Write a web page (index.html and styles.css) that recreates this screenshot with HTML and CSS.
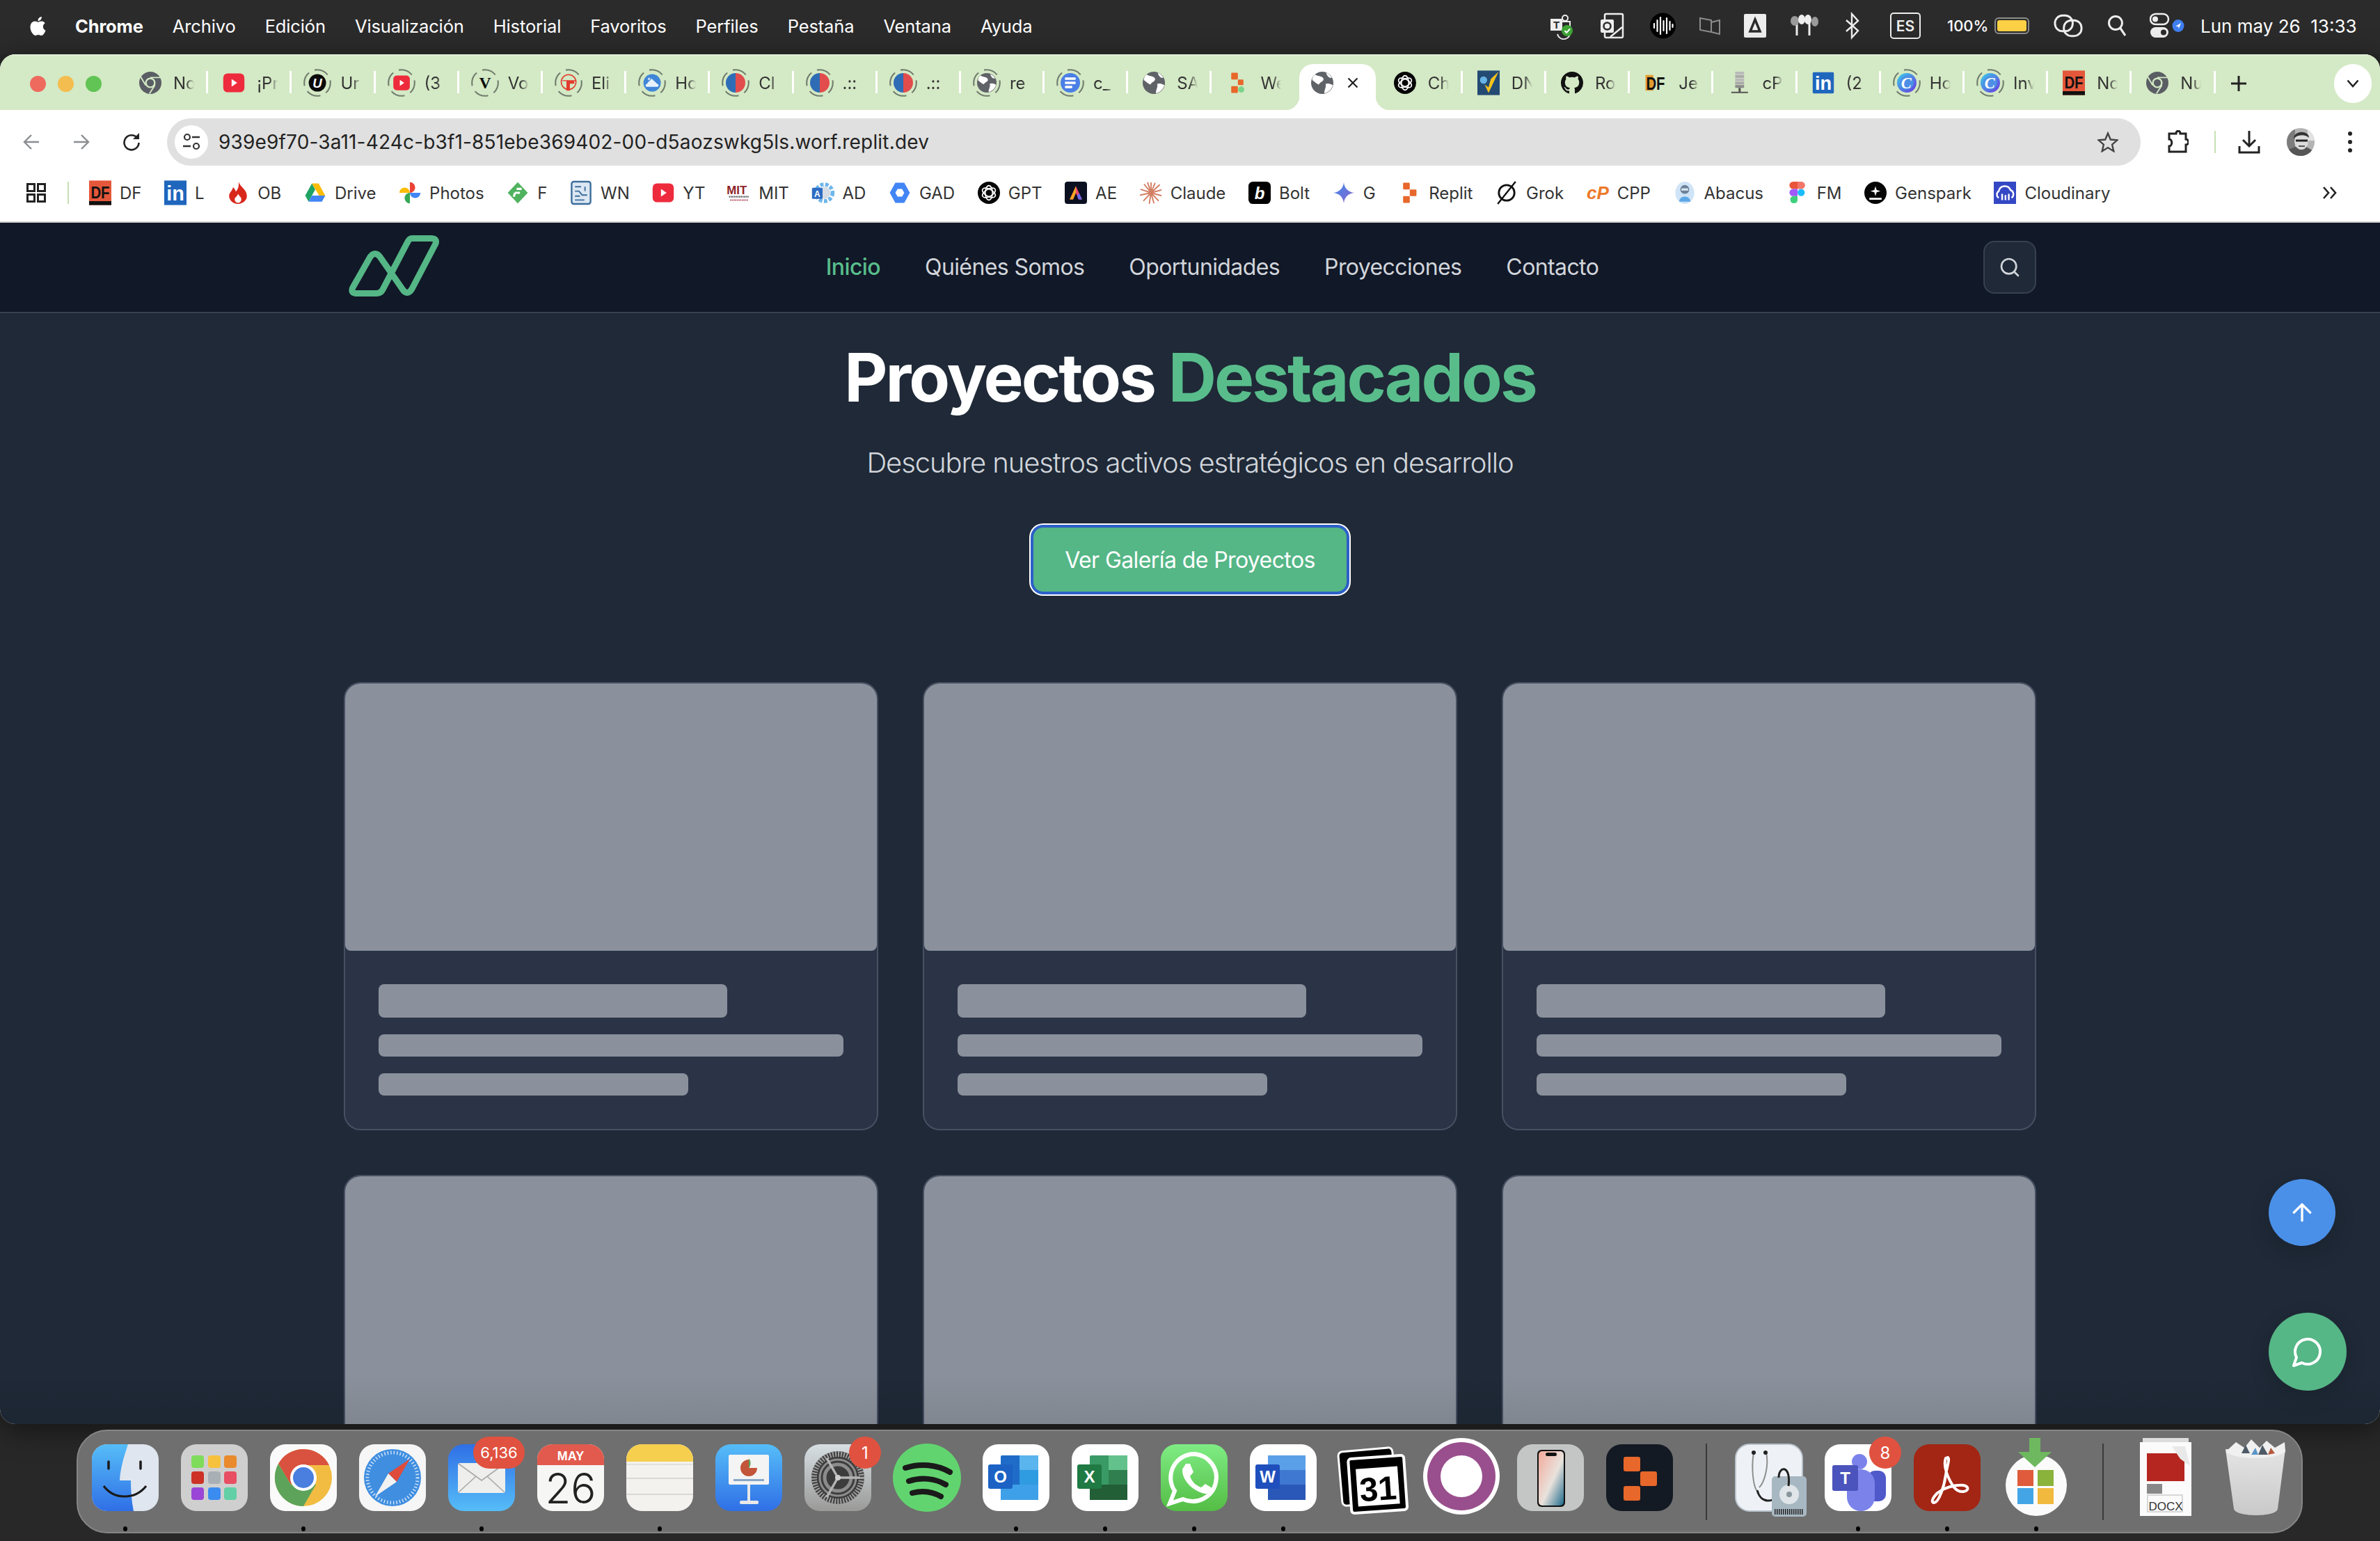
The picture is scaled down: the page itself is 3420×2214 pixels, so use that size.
FILE: index.html
```html
<!DOCTYPE html>
<html lang="es">
<head>
<meta charset="utf-8">
<title>Proyectos Destacados</title>
<link rel="stylesheet" href="styles.css">
</head>
<body>
<svg class="defs" width="0" height="0" aria-hidden="true">
  <defs>
    <linearGradient id="gBlue" x1="0" y1="0" x2="0" y2="1"><stop offset="0" stop-color="#56bdf8"/><stop offset="1" stop-color="#2f6fe6"/></linearGradient>
    <linearGradient id="gMail" x1="0" y1="0" x2="0" y2="1"><stop offset="0" stop-color="#2f6fe6"/><stop offset="1" stop-color="#56bdf8"/></linearGradient>
    <linearGradient id="gGreen" x1="0" y1="0" x2="0" y2="1"><stop offset="0" stop-color="#7fec84"/><stop offset="1" stop-color="#54bd45"/></linearGradient>
    <linearGradient id="gCyan" x1="0" y1="0" x2="1" y2="1"><stop offset="0" stop-color="#39d0e8"/><stop offset="1" stop-color="#6a35e0"/></linearGradient>
    <linearGradient id="gStar" x1="0" y1="0" x2="1" y2="1"><stop offset="0" stop-color="#3f8cf0"/><stop offset="1" stop-color="#8a63c9"/></linearGradient>
    <linearGradient id="gGray" x1="0" y1="0" x2="0" y2="1"><stop offset="0" stop-color="#d7dfe3"/><stop offset="1" stop-color="#9a9a98"/></linearGradient>
    <linearGradient id="gPhone" x1="0" y1="0" x2="1" y2="1"><stop offset="0" stop-color="#f2a99a"/><stop offset=".55" stop-color="#e9e2dc"/><stop offset="1" stop-color="#1e6a8c"/></linearGradient>
    <linearGradient id="gTrash" x1="0" y1="0" x2="0" y2="1"><stop offset="0" stop-color="#e4e4e4"/><stop offset="1" stop-color="#c9c9c9"/></linearGradient>

    <g id="i-ring"><circle cx="20" cy="20" r="23.5" fill="none" stroke="#6f7c6c" stroke-width="2.6" stroke-dasharray="26 11" stroke-dashoffset="6"/></g>
    <g id="i-chr"><circle cx="20" cy="20" r="20" fill="#5a5e64"/><circle cx="20" cy="20" r="9.5" fill="#d4e9c5"/><circle cx="20" cy="20" r="6.5" fill="#5a5e64"/><path d="M20 10.500H39M11.800 24.500L2.500 9M28.200 24.500L18.500 39.500" stroke="#d4e9c5" stroke-width="2.400" fill="none"/></g>
    <g id="i-globe"><circle cx="20" cy="20" r="20" fill="#5f6368"/><path d="M7 5C13 9 19 7 22 12C24 18 16 18 14 23C10 22 5 17 2 15C2 11 4 8 7 5ZM26 22C31 20 35 22 39 24C37 32 31 37 24 39C23 33 28 28 26 22ZM27 2C31 3 35 7 37 11C33 12 29 9 27 2Z" fill="#fff"/></g>
    <g id="i-yt"><rect x="1" y="3" width="38" height="34" rx="8" fill="#ee2b3c"/><path d="M16 13L26 20L16 27Z" fill="#fff"/></g>
    <g id="i-u"><circle cx="20" cy="20" r="20" fill="#0b0b0b"/><text x="20" y="31" class="ico-txt ico-it" font-size="30" fill="#fff" text-anchor="middle">U</text></g>
    <g id="i-v"><text x="20" y="33" class="ico-serif" font-size="38" fill="#0b0b0b" text-anchor="middle">V</text></g>
    <g id="i-eli"><circle cx="20" cy="18" r="17" fill="none" stroke="#e23b2e" stroke-width="2.500"/><path d="M6 15H36M16 15H32V21H22V37H16Z" fill="#e23b2e" stroke="#e23b2e" stroke-width="2"/></g>
    <g id="i-cloud"><circle cx="20" cy="20" r="20" fill="#3f86d8"/><path d="M8 29C4 29 4 22 9 22C10 17 16 16 19 10C23 15 28 18 31 22C36 22 36 29 32 29Z" fill="#e7f1fb"/><circle cx="13" cy="11" r="3" fill="#bcd6f2"/></g>
    <g id="i-half"><path d="M20 0A20 20 0 0 0 20 40Z" fill="#2e6db6"/><path d="M20 0A20 20 0 0 1 20 40Z" fill="#e24c4c"/></g>
    <g id="i-doc"><circle cx="20" cy="20" r="20" fill="#4a7fe6"/><rect x="9" y="9" width="22" height="5" rx="1" fill="#fff"/><rect x="9" y="17.500" width="22" height="5" rx="1" fill="#fff"/><rect x="9" y="26" width="15" height="5" rx="1" fill="#fff"/></g>
    <g id="i-replit"><rect x="9" y="2" width="12" height="12" rx="1.500" fill="#e8672a"/><rect x="21" y="14" width="12" height="12" rx="1.500" fill="#e8672a"/><rect x="9" y="26" width="12" height="12" rx="1.500" fill="#e8672a"/></g>
    <g id="i-we"><rect x="9" y="2" width="12" height="12" rx="1.500" fill="#e8672a"/><rect x="21" y="14" width="10" height="10" rx="1.500" fill="#e8672a"/><rect x="9" y="26" width="12" height="12" rx="1.500" fill="#e8672a"/><circle cx="27" cy="32" r="5.500" fill="#7ad48a"/></g>
    <g id="i-ai"><circle cx="20" cy="20" r="20" fill="#050505"/><g fill="none" stroke="#fff" stroke-width="2"><ellipse cx="20" cy="20" rx="6.500" ry="13"/><ellipse cx="20" cy="20" rx="6.500" ry="13" transform="rotate(60 20 20)"/><ellipse cx="20" cy="20" rx="6.500" ry="13" transform="rotate(120 20 20)"/></g></g>
    <g id="i-dn"><rect width="40" height="44" y="-2" fill="#234a72"/><path d="M13 23L20 38L38 0L24 13L20 28Z" fill="#f6c21d"/><circle cx="11" cy="15" r="6.500" fill="#66b3e6"/></g>
    <g id="i-gh"><path transform="scale(2.500)" fill="#111" d="M8 0C3.580 0 0 3.580 0 8c0 3.540 2.290 6.530 5.470 7.590.4.070.55-.17.55-.38 0-.19-.01-.82-.01-1.490-2.010.37-2.530-.49-2.690-.94-.09-.23-.48-.94-.82-1.130-.28-.15-.68-.52-.01-.53.63-.01 1.080.58 1.230.82.72 1.210 1.870.87 2.330.66.07-.52.28-.87.51-1.070-1.780-.2-3.640-.89-3.640-3.950 0-.87.31-1.590.82-2.150-.08-.2-.36-1.020.08-2.120 0 0 .67-.21 2.200.82.64-.18 1.320-.27 2-.27.68 0 1.360.09 2 .27 1.530-1.040 2.200-.82 2.200-.82.44 1.100.16 1.920.08 2.120.51.56.82 1.270.82 2.150 0 3.070-1.870 3.750-3.650 3.950.29.25.54.73.54 1.480 0 1.070-.01 1.930-.01 2.200 0 .21.15.46.55.38A8.013 8.013 0 0016 8c0-4.420-3.580-8-8-8z"/></g>
    <g id="i-je"><rect x="2" y="6" width="14" height="28" fill="#e29a2c"/><text x="20" y="33" class="ico-txt" font-size="32" fill="#111" text-anchor="middle" textLength="34" lengthAdjust="spacingAndGlyphs">DF</text></g>
    <g id="i-srv"><rect x="13" y="0" width="16" height="5" fill="#b9b9b9"/><rect x="13" y="6" width="16" height="5" fill="#a9a9a9"/><rect x="13" y="12" width="16" height="5" fill="#b9b9b9"/><rect x="13" y="18" width="16" height="5" fill="#a9a9a9"/><rect x="13" y="24" width="16" height="5" fill="#8a8a8a"/><rect x="19" y="29" width="4" height="8" fill="#555"/><rect x="6" y="36" width="30" height="2.500" fill="#555"/></g>
    <g id="i-in"><rect x="1" y="1" width="38" height="38" rx="2" fill="#1f66bd"/><text x="20" y="33" class="ico-txt" font-size="34" fill="#fff" text-anchor="middle">in</text></g>
    <g id="i-c"><circle cx="20" cy="20" r="20" fill="url(#gCyan)"/><circle cx="20" cy="20" r="14" fill="#4d8fe6"/><text x="19" y="31" class="ico-serif ico-it" font-size="32" fill="#fff" text-anchor="middle">C</text></g>
    <g id="i-df"><rect y="-2" width="40" height="44" fill="#e4573a"/><rect y="35" width="40" height="7" fill="#111"/><text x="20" y="30" class="ico-txt" font-size="30" fill="#111" text-anchor="middle" textLength="34" lengthAdjust="spacingAndGlyphs">DF</text></g>
  </defs>
</svg>

<div class="desktop">
  <header class="menubar">
    <svg class="apple" viewBox="0 0 24 24" width="27" height="31"><path fill="#fff" d="M12.152 6.896c-.948 0-2.415-1.078-3.960-1.040-2.040.027-3.910 1.183-4.961 3.014-2.117 3.675-.546 9.103 1.519 12.090 1.013 1.454 2.208 3.090 3.792 3.039 1.520-.065 2.090-.987 3.935-.987 1.831 0 2.350.987 3.960.948 1.637-.026 2.676-1.480 3.676-2.948 1.156-1.688 1.636-3.325 1.662-3.415-.039-.013-3.182-1.221-3.220-4.857-.026-3.040 2.480-4.494 2.597-4.559-1.429-2.090-3.623-2.324-4.390-2.376-2-.156-3.675 1.090-4.610 1.090zM15.530 3.830c.843-1.012 1.400-2.427 1.245-3.830-1.207.052-2.662.805-3.532 1.818-.780.896-1.454 2.338-1.273 3.714 1.338.104 2.715-.688 3.559-1.701"/></svg>
    <nav class="menu-left">
      <span class="menu-app">Chrome</span><span>Archivo</span><span>Edición</span><span>Visualización</span><span>Historial</span><span>Favoritos</span><span>Perfiles</span><span>Pestaña</span><span>Ventana</span><span>Ayuda</span>
    </nav>
    <div class="menu-right">
      <svg viewBox="0 0 42 40" width="42" height="40"><circle cx="25" cy="9" r="4" fill="none" stroke="#eee" stroke-width="2"/><path d="M4 10H21V27H4Z" fill="#eee"/><text x="12.500" y="24" class="ico-txt" font-size="15" fill="#2b2b2b" text-anchor="middle">T</text><path d="M21 14H32V28A8 8 0 0 1 14 32" fill="none" stroke="#eee" stroke-width="2"/><circle cx="28" cy="27" r="8" fill="#3fa535"/><path d="M24.500 27L27 30L32 24.500" fill="none" stroke="#fff" stroke-width="2"/></svg>
      <svg viewBox="0 0 37 40" width="37" height="40"><rect x="6" y="3" width="26" height="34" rx="2" fill="none" stroke="#eee" stroke-width="2.500"/><rect x="0" y="11" width="19" height="19" rx="2" fill="#eee"/><circle cx="9.500" cy="20.500" r="5" fill="none" stroke="#2b2b2b" stroke-width="2.500"/><path d="M14 36L31 22" stroke="#eee" stroke-width="2.500"/></svg>
      <svg viewBox="0 0 37 40" width="37" height="40"><circle cx="18.500" cy="20" r="18.500" fill="#000"/><path d="M6 17v6M10.500 12v16M15 8v24M19.500 13v14M24 9v22M28.500 14v12M32.500 18v4" stroke="#fff" stroke-width="2.200" stroke-linecap="round"/></svg>
      <svg viewBox="0 0 30 40" width="30" height="40"><path d="M1 9L17 12V29L1 26ZM17 15L29 12V32L17 29" fill="none" stroke="#8d8d8d" stroke-width="2"/></svg>
      <svg viewBox="0 0 32 40" width="32" height="40"><rect y="3" width="32" height="34" rx="2" fill="#eee"/><path d="M16 11L23 28H9Z" fill="none" stroke="#2b2b2b" stroke-width="3.500"/></svg>
      <svg viewBox="0 0 45 40" width="45" height="40"><path d="M10 14V34M28 14V34" stroke="#eee" stroke-width="3"/><ellipse cx="7" cy="13" rx="6" ry="7" fill="#9a9a9a"/><ellipse cx="17" cy="11" rx="5" ry="7" fill="#eee"/><ellipse cx="26" cy="11" rx="5" ry="7" fill="#eee"/><ellipse cx="36" cy="14" rx="5" ry="7" fill="#9a9a9a"/></svg>
      <svg viewBox="0 0 31 40" width="31" height="40"><path d="M2 12L19 27L10 37V3L19 13L2 28" fill="none" stroke="#eee" stroke-width="2.400"/></svg>
      <span class="lang">ES</span>
      <span class="battery"><span>100%</span><span class="bat-body"><span class="bat-fill"></span></span></span>
      <svg viewBox="0 0 45 40" width="44" height="40"><g fill="none" stroke="#eee" stroke-width="3"><rect x="2" y="5" width="26" height="23" rx="11"/><rect x="15" y="12" width="26" height="23" rx="11"/></g></svg>
      <svg viewBox="0 0 26 40" width="26" height="40"><circle cx="11" cy="16" r="9.500" fill="none" stroke="#eee" stroke-width="3"/><path d="M17.500 23L25 34" stroke="#eee" stroke-width="3.200"/></svg>
      <svg viewBox="0 0 50 40" width="50" height="40"><rect x="1" y="3" width="26" height="15" rx="7.500" fill="none" stroke="#eee" stroke-width="2.500"/><circle cx="8" cy="10.500" r="4" fill="#eee"/><rect x="1" y="22" width="26" height="15" rx="7.500" fill="#eee"/><circle cx="20" cy="29.500" r="4" fill="#2b2b2b"/><ellipse cx="41" cy="20" rx="8.500" ry="9" fill="#3f7ff0"/><path d="M37 21L45 16L42 24L41 21Z" fill="#fff"/></svg>
      <span class="clock">Lun may 26&nbsp;&nbsp;13:33</span>
    </div>
  </header>

  <div class="window">
    <div class="tabstrip">
      <div class="traffic"><i class="tl tl-r"></i><i class="tl tl-y"></i><i class="tl tl-g"></i></div>
      <div class="tab"><svg class="fav" viewBox="-5 -5 50 50"><use href="#i-chr"/></svg><span class="tab-label">No</span></div>
      <div class="tab"><svg class="fav" viewBox="-5 -5 50 50"><use href="#i-yt"/></svg><span class="tab-label">¡Pr</span></div>
      <div class="tab"><svg class="fav" viewBox="-5 -5 50 50"><use href="#i-ring"/><use href="#i-u" transform="translate(4.500 4.500) scale(.78)"/></svg><span class="tab-label">Ur</span></div>
      <div class="tab"><svg class="fav" viewBox="-5 -5 50 50"><use href="#i-ring"/><use href="#i-yt" transform="translate(4.500 4.500) scale(.78)"/></svg><span class="tab-label">(3</span></div>
      <div class="tab"><svg class="fav" viewBox="-5 -5 50 50"><use href="#i-ring"/><use href="#i-v" transform="translate(4.500 4.500) scale(.78)"/></svg><span class="tab-label">Vo</span></div>
      <div class="tab"><svg class="fav" viewBox="-5 -5 50 50"><use href="#i-ring"/><use href="#i-eli" transform="translate(4.500 4.500) scale(.78)"/></svg><span class="tab-label">Eli</span></div>
      <div class="tab"><svg class="fav" viewBox="-5 -5 50 50"><use href="#i-ring"/><use href="#i-cloud" transform="translate(4.500 4.500) scale(.78)"/></svg><span class="tab-label">Ho</span></div>
      <div class="tab"><svg class="fav" viewBox="-5 -5 50 50"><use href="#i-ring"/><use href="#i-half" transform="translate(2.500 2.500) scale(.875)"/></svg><span class="tab-label">Cl</span></div>
      <div class="tab"><svg class="fav" viewBox="-5 -5 50 50"><use href="#i-ring"/><use href="#i-half" transform="translate(2.500 2.500) scale(.875)"/></svg><span class="tab-label">.::</span></div>
      <div class="tab"><svg class="fav" viewBox="-5 -5 50 50"><use href="#i-ring"/><use href="#i-half" transform="translate(2.500 2.500) scale(.875)"/></svg><span class="tab-label">.::</span></div>
      <div class="tab"><svg class="fav" viewBox="-5 -5 50 50"><use href="#i-ring"/><use href="#i-globe" transform="translate(2.500 2.500) scale(.875)"/></svg><span class="tab-label">re</span></div>
      <div class="tab"><svg class="fav" viewBox="-5 -5 50 50"><use href="#i-ring"/><use href="#i-doc" transform="translate(2.500 2.500) scale(.875)"/></svg><span class="tab-label">c_</span></div>
      <div class="tab"><svg class="fav" viewBox="-5 -5 50 50"><use href="#i-globe"/></svg><span class="tab-label">SA</span></div>
      <div class="tab tab-pre"><svg class="fav" viewBox="-5 -5 50 50"><use href="#i-we"/></svg><span class="tab-label">We</span></div>
      <div class="tab-active"><svg class="fav fav-active" viewBox="-5 -5 50 50"><use href="#i-globe"/></svg><svg class="close" viewBox="0 0 16 16" width="16" height="16"><path d="M1.500 1.500L14.500 14.500M14.500 1.500L1.500 14.500" stroke="#222" stroke-width="2.200"/></svg></div>
      <div class="tab"><svg class="fav" viewBox="-5 -5 50 50"><use href="#i-ai"/></svg><span class="tab-label">Ch</span></div>
      <div class="tab"><svg class="fav" viewBox="-5 -5 50 50"><use href="#i-dn"/></svg><span class="tab-label">DN</span></div>
      <div class="tab"><svg class="fav" viewBox="-5 -5 50 50"><use href="#i-gh"/></svg><span class="tab-label">Ro</span></div>
      <div class="tab"><svg class="fav" viewBox="-5 -5 50 50"><use href="#i-je"/></svg><span class="tab-label">Je</span></div>
      <div class="tab"><svg class="fav" viewBox="-5 -5 50 50"><use href="#i-srv"/></svg><span class="tab-label">cP</span></div>
      <div class="tab"><svg class="fav" viewBox="-5 -5 50 50"><use href="#i-in"/></svg><span class="tab-label">(2</span></div>
      <div class="tab"><svg class="fav" viewBox="-5 -5 50 50"><use href="#i-ring"/><use href="#i-c" transform="translate(2.500 2.500) scale(.875)"/></svg><span class="tab-label">Ho</span></div>
      <div class="tab"><svg class="fav" viewBox="-5 -5 50 50"><use href="#i-ring"/><use href="#i-c" transform="translate(2.500 2.500) scale(.875)"/></svg><span class="tab-label">Inv</span></div>
      <div class="tab"><svg class="fav" viewBox="-5 -5 50 50"><use href="#i-df"/></svg><span class="tab-label">No</span></div>
      <div class="tab"><svg class="fav" viewBox="-5 -5 50 50"><use href="#i-chr"/></svg><span class="tab-label">Nu</span></div>
      <svg class="newtab" viewBox="0 0 22 24" width="22" height="24"><path d="M11 1V23M0 12H22" stroke="#222" stroke-width="3"/></svg>
      <div class="tabsearch"><svg viewBox="0 0 18 12" width="18" height="12"><path d="M1.500 1.500L9 10L16.500 1.500" fill="none" stroke="#222" stroke-width="2.500"/></svg></div>
    </div>

    <div class="toolbar">
      <div class="tb-nav"><svg viewBox="0 0 24 24" width="24" height="24"><path d="M23 12H2M12 2L2 12L12 22" fill="none" stroke="#8a8d91" stroke-width="2.400"/></svg></div>
      <div class="tb-nav"><svg viewBox="0 0 24 24" width="24" height="24"><path d="M1 12H22M12 2L22 12L12 22" fill="none" stroke="#8a8d91" stroke-width="2.400"/></svg></div>
      <div class="tb-nav"><svg viewBox="0 0 26 26" width="26" height="26"><path d="M21 7A10.500 10.500 0 1 0 23.500 14" fill="none" stroke="#222" stroke-width="2.600"/><path d="M15 9H24V0Z" fill="#222"/></svg></div>
      <div class="omnibox">
        <span class="site-info"><svg viewBox="0 0 26 26" width="26" height="26"><circle cx="7" cy="6" r="4" fill="none" stroke="#333" stroke-width="2.200"/><path d="M14 6H25M1 19H12" stroke="#333" stroke-width="2.400"/><circle cx="20" cy="19" r="4" fill="none" stroke="#333" stroke-width="2.200"/></svg></span>
        <span class="url">939e9f70-3a11-424c-b3f1-851ebe369402-00-d5aozswkg5ls.worf.replit.dev</span>
        <svg class="star" viewBox="0 0 30 30" width="30" height="30"><path d="M15 2.500L18.800 11.500L28.500 12.300L21.100 18.700L23.300 28.200L15 23.100L6.700 28.200L8.900 18.700L1.500 12.300L11.200 11.500Z" fill="none" stroke="#444" stroke-width="2.400"/></svg>
      </div>
      <div class="tb-ext"><svg viewBox="0 0 32 34" width="32" height="34"><path d="M11 5H14C14 0 20 0 20 5H28V13C33 13 33 21 28 21V31H4V23C9 23 9 13 4 13V5Z" fill="none" stroke="#222" stroke-width="3"/></svg></div>
      <i class="tb-sep"></i>
      <div class="tb-dl"><svg viewBox="0 0 32 34" width="32" height="34"><path d="M16 1V22M7 14L16 23L25 14M2 23V32H30V23" fill="none" stroke="#222" stroke-width="3"/></svg></div>
      <div class="tb-avatar"><svg viewBox="0 0 40 40" width="40" height="40"><defs><clipPath id="av"><circle cx="20" cy="20" r="20"/></clipPath></defs><g clip-path="url(#av)"><rect width="40" height="40" fill="#b4b4b4"/><path d="M0 0H12V40H0Z" fill="#7c7c7c"/><path d="M30 0H40V18H30Z" fill="#e2e2e2"/><path d="M0 32L12 27L28 27L40 34V40H0Z" fill="#565656"/><ellipse cx="21" cy="19" rx="10" ry="12" fill="#dcdcdc"/><path d="M10 15C10 3 32 3 32 14C27 9 16 9 10 15Z" fill="#333"/><path d="M13 18H30" stroke="#222" stroke-width="3"/><path d="M17 26H26" stroke="#555" stroke-width="2"/></g></svg></div>
      <div class="tb-dots"><i></i><i></i><i></i></div>
    </div>

    <div class="bookmarks">
      <svg class="apps" viewBox="0 0 28 28" width="28" height="28"><g fill="none" stroke="#222" stroke-width="3"><rect x="1.500" y="1.500" width="10" height="10"/><rect x="16.500" y="1.500" width="10" height="10"/><rect x="1.500" y="16.500" width="10" height="10"/><rect x="16.500" y="16.500" width="10" height="10"/></g></svg>
      <i class="bm-sep"></i>
      <a class="bm"><svg viewBox="0 0 40 40"><use href="#i-df"/></svg>DF</a>
      <a class="bm"><svg viewBox="0 0 40 40"><rect width="40" height="44" y="-2" fill="#1f66bd"/><text x="20" y="34" class="ico-txt" font-size="36" fill="#fff" text-anchor="middle">in</text></svg>L</a>
      <a class="bm"><svg viewBox="0 0 40 40"><path d="M21 0C24 10 36 14 36 26C36 34 28 40 20 40C11 40 4 33 4 26C4 19 10 17 11 10C14 12 16 16 16 18C20 14 22 8 21 0Z" fill="#d8281c"/><path d="M20 22C23 27 26 28 26 32A6 6 0 0 1 14 32C14 28 19 27 20 22Z" fill="#fff"/></svg>OB</a>
      <a class="bm"><svg viewBox="0 0 40 40"><path d="M14 3L20 14L8 36L2 25Z" fill="#1fa463"/><path d="M14 3H26L38 25H27Z" fill="#fbbc04"/><path d="M8 36H32L38 25H14Z" fill="#4285f4"/></svg>Drive</a>
      <a class="bm"><svg viewBox="0 0 40 40"><path d="M20 20V1A9.500 9.500 0 0 1 20 20Z" fill="#ea4335"/><path d="M20 20H39A9.500 9.500 0 0 1 20 20Z" fill="#4285f4"/><path d="M20 20V39A9.500 9.500 0 0 1 20 20Z" fill="#34a853"/><path d="M20 20H1A9.500 9.500 0 0 1 20 20Z" fill="#fbbc04"/></svg>Photos</a>
      <a class="bm"><svg viewBox="0 0 40 40"><path d="M20 1L38 20L20 39L2 20Z" fill="#4fb25e"/><path d="M18 13H27M15 20H24M15 20L13 27" stroke="#fff" stroke-width="4" fill="none"/></svg>F</a>
      <a class="bm"><svg viewBox="0 0 40 40"><rect x="3" y="0" width="34" height="40" rx="4" fill="#dbe7f2" stroke="#3c6d9c" stroke-width="3"/><path d="M9 9H20M9 17H16L22 24H31M9 26H18M9 33H26M27 9V17" stroke="#3c6d9c" stroke-width="2.400" fill="none"/></svg>WN</a>
      <a class="bm"><svg viewBox="0 0 40 40"><use href="#i-yt"/></svg>YT</a>
      <a class="bm"><svg viewBox="0 0 40 40"><text x="16" y="22" class="ico-txt" font-size="21" fill="#8d2326" text-anchor="middle">MIT</text><path d="M2 27H38" stroke="#555" stroke-width="3" stroke-dasharray="2 1"/><path d="M4 33H36" stroke="#b56" stroke-width="2.500" stroke-dasharray="2 1"/></svg>MIT</a>
      <a class="bm"><svg viewBox="0 0 40 40"><circle cx="23" cy="20" r="15" fill="none" stroke="#6fb6ea" stroke-width="7" stroke-dasharray="6 3"/><circle cx="23" cy="20" r="11" fill="#d6dde5"/><rect x="1" y="11" width="19" height="20" rx="2" fill="#2c6cc2"/><text x="10.500" y="27" class="ico-txt" font-size="15" fill="#fff" text-anchor="middle">A</text></svg>AD</a>
      <a class="bm"><svg viewBox="0 0 40 40"><path d="M12 2H28L38 20L28 38H12L2 20Z" fill="#4285f4"/><path d="M16 13H24L28 20L24 27H16L12 20Z" fill="#fff"/></svg>GAD</a>
      <a class="bm"><svg viewBox="0 0 40 40"><use href="#i-ai"/></svg>GPT</a>
      <a class="bm"><svg viewBox="0 0 40 40"><rect width="40" height="40" rx="5" fill="#0b1020"/><path d="M20 8L9 32H15L20 20L25 32H31Z" fill="#f04a70"/><path d="M20 8L9 32H15L20 20Z" fill="#f5a623"/><path d="M22 25L25 32H31L26 21Z" fill="#6a6cf0"/></svg>AE</a>
      <a class="bm"><svg viewBox="0 0 40 40"><path d="M20 20V2M20 20L27 3M20 20L35 6M20 20L38 15M20 20L38 25M20 20L33 34M20 20L25 38M20 20L17 39M20 20L7 34M20 20L1 24M20 20L2 14M20 20L8 5M20 20L14 2" stroke="#d37f63" stroke-width="2.400" stroke-linecap="round"/></svg>Claude</a>
      <a class="bm"><svg viewBox="0 0 40 40"><rect width="40" height="40" rx="8" fill="#000"/><text x="20" y="31" class="ico-txt ico-it" font-size="30" fill="#fff" text-anchor="middle">b</text></svg>Bolt</a>
      <a class="bm"><svg viewBox="0 0 40 40"><path d="M20 1C21 12 28 19 39 20C28 21 21 28 20 39C19 28 12 21 1 20C12 19 19 12 20 1Z" fill="url(#gStar)"/></svg>G</a>
      <a class="bm"><svg viewBox="0 0 40 40"><use href="#i-replit"/></svg>Replit</a>
      <a class="bm"><svg viewBox="0 0 40 40"><circle cx="20" cy="20" r="14" fill="none" stroke="#111" stroke-width="3.500"/><path d="M4 40L36 0" stroke="#111" stroke-width="3"/></svg>Grok</a>
      <a class="bm"><svg viewBox="0 0 40 40"><text x="20" y="31" class="ico-txt ico-it" font-size="32" fill="#ec7a2c" text-anchor="middle" textLength="40" lengthAdjust="spacingAndGlyphs">cP</text></svg>CPP</a>
      <a class="bm"><svg viewBox="0 0 40 40"><ellipse cx="20" cy="20" rx="17" ry="20" fill="#cfe4f6"/><circle cx="20" cy="14" r="8" fill="#6d8296"/><rect x="14" y="12" width="12" height="4" fill="#d7e7f4"/><path d="M10 36C10 24 30 24 30 36Z" fill="#5da7e6"/></svg>Abacus</a>
      <a class="bm"><svg viewBox="0 0 40 40"><path d="M20 0H12A6.500 6.500 0 0 0 12 13H20Z" fill="#e8553a"/><path d="M20 0H27A6.500 6.500 0 0 1 27 13H20Z" fill="#f2766a"/><path d="M20 13H12A6.500 6.500 0 0 0 12 26H20Z" fill="#a259ff"/><circle cx="26.500" cy="19.500" r="6.500" fill="#1abcfe"/><path d="M12 26H20V33A6.500 6.500 0 1 1 12 26Z" fill="#3ecf7d"/></svg>FM</a>
      <a class="bm"><svg viewBox="0 0 40 40"><circle cx="20" cy="20" r="20" fill="#050505"/><path d="M20 8L22 15L29 17L22 19L20 26L18 19L11 17L18 15Z" fill="#fff"/><rect x="9" y="29" width="22" height="3.500" fill="#fff"/></svg>Genspark</a>
      <a class="bm"><svg viewBox="0 0 40 40"><rect width="40" height="40" fill="#3448c5"/><path d="M9 29A7 7 0 0 1 9 17A11 11 0 0 1 30 15A8 8 0 0 1 32 29" fill="none" stroke="#fff" stroke-width="3"/><path d="M15 22V33M21 24V33M27 22V33" stroke="#fff" stroke-width="3"/></svg>Cloudinary</a>
      <svg class="bm-more" viewBox="0 0 21 20" width="21" height="20"><path d="M2 2L9 10L2 18M12 2L19 10L12 18" fill="none" stroke="#222" stroke-width="2.600"/></svg>
    </div>

    <main class="page">
      <nav class="site-nav">
        <a class="logo" aria-label="Logo"><svg viewBox="0 0 140 110" width="140" height="110"><path d="M98 13.500H125Q134.500 13.500 132 21L98 86Q91 97 84 86L52 40Q45 31 38 40L13 84Q9 92.500 19 92.500H47Q53 92.500 56 87L91 20Q94 13.500 98 13.500Z" fill="none" stroke="#55b686" stroke-width="9" stroke-linejoin="round"/></svg></a>
        <div class="nav-links">
          <a class="nav-active">Inicio</a><a>Quiénes Somos</a><a>Oportunidades</a><a>Proyecciones</a><a>Contacto</a>
        </div>
        <button class="search-btn" aria-label="Buscar"><svg viewBox="0 0 24 24" width="32" height="32"><circle cx="11" cy="11" r="8" fill="none" stroke="#d1d5db" stroke-width="2"/><path d="M21 21L16.650 16.650" stroke="#d1d5db" stroke-width="2" stroke-linecap="round"/></svg></button>
      </nav>

      <section class="hero">
        <h1 class="hero-title">Proyectos <span class="accent">Destacados</span></h1>
        <p class="hero-sub">Descubre nuestros activos estratégicos en desarrollo</p>
        <button class="hero-btn">Ver Galería de Proyectos</button>
        <div class="grid">
          <article class="card"><div class="card-img"></div><div class="card-body"><div class="sk sk-title"></div><div class="sk sk-line"></div><div class="sk sk-short"></div></div></article>
          <article class="card"><div class="card-img"></div><div class="card-body"><div class="sk sk-title"></div><div class="sk sk-line"></div><div class="sk sk-short"></div></div></article>
          <article class="card"><div class="card-img"></div><div class="card-body"><div class="sk sk-title"></div><div class="sk sk-line"></div><div class="sk sk-short"></div></div></article>
          <article class="card"><div class="card-img"></div><div class="card-body"><div class="sk sk-title"></div><div class="sk sk-line"></div><div class="sk sk-short"></div></div></article>
          <article class="card"><div class="card-img"></div><div class="card-body"><div class="sk sk-title"></div><div class="sk sk-line"></div><div class="sk sk-short"></div></div></article>
          <article class="card"><div class="card-img"></div><div class="card-body"><div class="sk sk-title"></div><div class="sk sk-line"></div><div class="sk sk-short"></div></div></article>
        </div>
      </section>

      <button class="fab fab-up" aria-label="Subir"><svg viewBox="0 0 24 24" width="40" height="40"><path d="M5 12L12 5L19 12M12 19V5" fill="none" stroke="#fff" stroke-width="2" stroke-linecap="round" stroke-linejoin="round"/></svg></button>
      <button class="fab fab-chat" aria-label="Chat"><svg viewBox="0 0 24 24" width="48" height="48"><path d="M7.900 20A9 9 0 1 0 4 16.100L2 22Z" fill="none" stroke="#fff" stroke-width="2" stroke-linecap="round" stroke-linejoin="round"/></svg></button>
    </main>
  </div>

  <footer class="dock">
    <div class="dk dk-on"><svg viewBox="0 0 96 96"><rect width="96" height="96" rx="22" fill="#dfe6f0"/><path d="M22 0H52C46 18 41 34 40 52H56C56 66 57 82 60 96H22A22 22 0 0 1 0 74V22A22 22 0 0 1 22 0Z" fill="url(#gBlue)"/><path d="M24 25V35M70 25V35" stroke="#1a1a1a" stroke-width="3.500" stroke-linecap="round"/><path d="M17 60C32 80 62 80 78 60" fill="none" stroke="#1a1a1a" stroke-width="3"/></svg></div>
    <div class="dk"><svg viewBox="0 0 96 96"><rect width="96" height="96" rx="22" fill="#cfcfcf"/><rect x="15" y="16" width="18" height="18" rx="4" fill="#7fdc5a"/><rect x="39" y="16" width="18" height="18" rx="4" fill="#f6c13c"/><rect x="62" y="16" width="18" height="18" rx="4" fill="#e98a2c"/><rect x="15" y="39" width="18" height="18" rx="4" fill="#cc3326"/><rect x="39" y="39" width="18" height="18" rx="4" fill="#a9b0b5"/><rect x="62" y="39" width="18" height="18" rx="4" fill="#e84f62"/><rect x="15" y="62" width="18" height="18" rx="4" fill="#9a45d6"/><rect x="39" y="62" width="18" height="18" rx="4" fill="#3b8cf0"/><rect x="62" y="62" width="18" height="18" rx="4" fill="#62cfa6"/></svg></div>
    <div class="dk dk-on"><svg viewBox="0 0 96 96"><rect width="96" height="96" rx="22" fill="#fafafa"/><circle cx="48" cy="48" r="41" fill="#f2bc42"/><path d="M48 7A41 41 0 0 0 12 28L30 58L48 30H85A41 41 0 0 0 48 7Z" fill="#d9523f"/><path d="M12 28A41 41 0 0 0 48 89L66 58H30Z" fill="#5da45a"/><circle cx="48" cy="48" r="19" fill="#fff"/><circle cx="48" cy="48" r="15" fill="#4a7fe0"/></svg></div>
    <div class="dk"><svg viewBox="0 0 96 96"><rect width="96" height="96" rx="22" fill="#f6f6f6"/><circle cx="48" cy="48" r="41" fill="#3f8ee0"/><circle cx="48" cy="48" r="36" fill="none" stroke="#cfe3f7" stroke-width="5" stroke-dasharray="1.500 3"/><path d="M73 21L42 42L54 54Z" fill="#df4c3b"/><path d="M23 75L42 42L54 54Z" fill="#f2f2f2"/></svg></div>
    <div class="dk dk-on"><svg viewBox="0 0 96 96"><rect width="96" height="96" rx="22" fill="url(#gMail)"/><rect x="14" y="27" width="68" height="43" rx="3" fill="#eeeeec"/><path d="M15 28L48 52L81 28M15 69L40 46M81 69L56 46" fill="none" stroke="#a9a9a9" stroke-width="1.600"/></svg><span class="badge badge-wide">6,136</span></div>
    <div class="dk"><svg viewBox="0 0 96 96"><rect width="96" height="96" rx="22" fill="#f6f6f4"/><path d="M22 0H74A22 22 0 0 1 96 22V30H0V22A22 22 0 0 1 22 0Z" fill="#e25a4d"/><text x="48" y="23" class="ico-txt" font-size="18" fill="#fff" text-anchor="middle">MAY</text><text x="48" y="85" class="ico-light" font-size="60" fill="#222" text-anchor="middle">26</text></svg></div>
    <div class="dk dk-on"><svg viewBox="0 0 96 96"><rect width="96" height="96" rx="22" fill="#f3f2ee"/><path d="M22 0H74A22 22 0 0 1 96 22V25H0V22A22 22 0 0 1 22 0Z" fill="#f6cf4e"/><path d="M0 29H96" stroke="#cfcfcb" stroke-width="2" stroke-dasharray="1 1"/><path d="M0 49H96M0 72H96" stroke="#d8d8d4" stroke-width="2"/></svg></div>
    <div class="dk"><svg viewBox="0 0 96 96"><rect width="96" height="96" rx="22" fill="url(#gBlue)"/><rect x="19" y="15" width="58" height="43" rx="2" fill="#f4f4f4"/><path d="M48 20V35A12 12 0 0 0 48 20Z" fill="#5aa75a"/><path d="M48 22A12 12 0 1 0 60 34H48Z" fill="#c2553a"/><rect x="26" y="50" width="44" height="3" fill="#88a8c8"/><rect x="46" y="58" width="4" height="24" fill="#e8e8e8"/><rect x="35" y="81" width="27" height="5" rx="2" fill="#e8e8e8"/></svg></div>
    <div class="dk"><svg viewBox="0 0 96 96"><rect width="96" height="96" rx="22" fill="url(#gGray)"/><circle cx="48" cy="48" r="38" fill="#3c3c3c"/><circle cx="48" cy="48" r="34" fill="none" stroke="#a0a0a0" stroke-width="8" stroke-dasharray="2 2"/><circle cx="48" cy="48" r="26" fill="none" stroke="#8c8c8c" stroke-width="3"/><circle cx="48" cy="48" r="19" fill="none" stroke="#8c8c8c" stroke-width="5"/><path d="M48 48L80 48M48 48L32 20M48 48L32 76" stroke="#b4b4b4" stroke-width="3.500"/><circle cx="48" cy="48" r="4" fill="#cfcfcf"/></svg><span class="badge">1</span></div>
    <div class="dk"><svg viewBox="0 0 96 96"><circle cx="48" cy="48" r="49" fill="#62d46f"/><path d="M17 34C38 27 62 29 81 40M22 53C40 47 60 49 75 58M27 70C42 66 56 68 68 75" fill="none" stroke="#1a1a1a" stroke-width="8" stroke-linecap="round"/></svg></div>
    <div class="dk dk-on"><svg viewBox="0 0 96 96"><rect width="96" height="96" rx="22" fill="#fff"/><rect x="26" y="16" width="54" height="62" rx="2" fill="#1e6cc8"/><rect x="53" y="16" width="27" height="21" fill="#5ab4ee"/><rect x="53" y="37" width="27" height="21" fill="#2f9be0"/><rect x="26" y="58" width="54" height="22" fill="#3ea0e8"/><rect x="8" y="29" width="35" height="35" rx="3" fill="#1b62c4"/><text x="25.500" y="55" class="ico-txt" font-size="24" fill="#fff" text-anchor="middle">O</text></svg></div>
    <div class="dk dk-on"><svg viewBox="0 0 96 96"><rect width="96" height="96" rx="22" fill="#fff"/><rect x="26" y="16" width="54" height="62" rx="2" fill="#3a9a66"/><rect x="53" y="16" width="27" height="21" fill="#63c28c"/><rect x="26" y="58" width="54" height="22" fill="#225e36"/><rect x="53" y="37" width="27" height="21" fill="#2f7f4f"/><rect x="8" y="29" width="35" height="35" rx="3" fill="#1f7a43"/><text x="25.500" y="55" class="ico-txt" font-size="24" fill="#fff" text-anchor="middle">X</text></svg></div>
    <div class="dk dk-on"><svg viewBox="0 0 96 96"><rect width="96" height="96" rx="22" fill="url(#gGreen)"/><path d="M48 14A34 34 0 0 0 20 67L13 85L32 79A34 34 0 1 0 48 14Z" fill="none" stroke="#fff" stroke-width="6"/><path d="M36 28L42 28L47 40L42 46C45 54 50 59 58 62L64 57L74 63L72 70C60 76 30 58 31 36Z" fill="#fff"/></svg></div>
    <div class="dk dk-on"><svg viewBox="0 0 96 96"><rect width="96" height="96" rx="22" fill="#fff"/><rect x="26" y="16" width="54" height="21" fill="#5aa0e8"/><rect x="26" y="37" width="54" height="21" fill="#3f78d0"/><rect x="26" y="58" width="54" height="22" fill="#2a58b8"/><rect x="8" y="29" width="35" height="35" rx="3" fill="#1f4fbc"/><text x="25.500" y="55" class="ico-txt" font-size="24" fill="#fff" text-anchor="middle">W</text></svg></div>
    <div class="dk"><svg viewBox="0 0 96 96"><g transform="rotate(-5 48 48)"><rect x="2" y="7" width="78" height="78" rx="6" fill="#000" stroke="#fff" stroke-width="3"/></g><g transform="rotate(-4 48 48)"><rect x="15" y="19" width="80" height="78" rx="4" fill="#000" stroke="#fff" stroke-width="4"/><rect x="25" y="34" width="60" height="54" fill="#fff"/><text x="55" y="81" class="ico-txt" font-size="48" fill="#000" text-anchor="middle">31</text></g></svg></div>
    <div class="dk dk-big"><svg viewBox="0 0 110 112"><circle cx="55" cy="56" r="55" fill="#fff"/><circle cx="55" cy="56" r="49" fill="#994f8d"/><circle cx="55" cy="56" r="30" fill="#fff"/></svg></div>
    <div class="dk"><svg viewBox="0 0 96 96"><rect width="96" height="96" rx="22" fill="#c4c5c5"/><rect x="29" y="8" width="40" height="82" rx="6" fill="#111"/><rect x="31" y="10" width="36" height="78" rx="5" fill="url(#gPhone)"/><rect x="41" y="12" width="16" height="5" rx="2.500" fill="#111"/></svg></div>
    <div class="dk"><svg viewBox="0 0 96 96"><rect width="96" height="96" rx="22" fill="#141a24"/><rect x="25" y="18" width="24" height="21" rx="3" fill="#e8672a"/><rect x="49" y="39" width="24" height="21" rx="3" fill="#e8672a"/><rect x="25" y="60" width="24" height="21" rx="3" fill="#e8672a"/></svg></div>
    <i class="dk-sep"></i>
    <div class="dk"><svg viewBox="0 0 96 96"><rect width="96" height="96" rx="20" fill="#eef2f6" stroke="#b9c3cc" stroke-width="2"/><path d="M26 12C22 36 26 60 30 66M44 12C48 30 42 54 34 62" fill="none" stroke="#8e8e8e" stroke-width="2"/><circle cx="26" cy="12" r="3" fill="#222"/><circle cx="43" cy="12" r="3" fill="#222"/><path d="M31 66C36 86 56 84 60 72" fill="none" stroke="#222" stroke-width="3"/><rect x="52" y="46" width="50" height="58" rx="5" fill="#a8b8c2"/><circle cx="77" cy="72" r="14" fill="#dfe5e8"/><circle cx="77" cy="72" r="4" fill="#8a969e"/><path d="M56 97H98" stroke="#222" stroke-width="8" stroke-dasharray="1.500 1.500"/><path d="M62 48C62 30 80 30 76 60" fill="none" stroke="#222" stroke-width="3"/></svg></div>
    <div class="dk dk-on"><svg viewBox="0 0 96 96"><rect width="96" height="96" rx="22" fill="#fff"/><circle cx="50" cy="25" r="11" fill="#7b83eb"/><rect x="62" y="38" width="26" height="44" rx="10" fill="#5059c9"/><rect x="32" y="36" width="40" height="60" rx="20" fill="#7b83eb"/><rect x="11" y="30" width="37" height="37" rx="3" fill="#4b53bc"/><text x="29.500" y="57" class="ico-txt" font-size="24" fill="#fff" text-anchor="middle">T</text></svg><span class="badge">8</span></div>
    <div class="dk dk-on"><svg viewBox="0 0 96 96"><rect width="96" height="96" rx="22" fill="#a32513"/><path d="M46 20C42 30 48 48 58 62C66 72 80 68 77 62C74 56 50 58 34 70C26 78 25 84 29 84C36 84 44 60 46 44C48 30 52 22 49 19Z" fill="none" stroke="#fff" stroke-width="4"/></svg></div>
    <div class="dk dk-on dk-tall"><svg viewBox="0 0 96 112"><ellipse cx="48" cy="68" rx="44" ry="44" fill="#fbfbfb"/><rect x="21" y="46" width="23" height="23" fill="#df5b3c"/><rect x="50" y="46" width="23" height="23" fill="#8ab33c"/><rect x="21" y="72" width="23" height="23" fill="#44a5e6"/><rect x="50" y="72" width="23" height="23" fill="#f2b93f"/><path d="M38 0H54V20H70L46 42L22 20H38Z" fill="#6eb95f"/></svg></div>
    <i class="dk-sep"></i>
    <div class="dk dk-tall"><svg viewBox="0 0 96 112"><g transform="translate(11 0)"><rect x="4" y="0" width="66" height="20" fill="#dcdcdc"/><rect x="0" y="6" width="74" height="106" fill="#fbfbfb"/><rect x="10" y="22" width="54" height="40" fill="#b52620"/><path d="M46 12L65 12L72 40L58 30Z" fill="#e9e9e9"/><rect x="10" y="66" width="22" height="14" fill="#888"/><rect x="11" y="82" width="50" height="24" fill="none" stroke="#ccc" stroke-width="1.500"/><text x="37" y="104" class="ico-reg" font-size="17" fill="#333" text-anchor="middle">DOCX</text></g></svg></div>
    <div class="dk dk-tall"><svg viewBox="0 0 96 112"><g transform="translate(5 0)"><path d="M1 16H87L76 102C74 114 16 114 13 102Z" fill="url(#gTrash)"/><path d="M1 20L16 6L28 14L38 2L50 14L60 4L72 14L86 6L87 20C70 32 18 32 1 20Z" fill="#f0f0f0"/><path d="M24 22L30 10L36 22ZM48 24L54 10L62 24Z" fill="#4e5a66"/><path d="M38 24L44 14L48 24Z" fill="#5a96c8"/><path d="M62 24L66 14L72 22Z" fill="#b5593f"/></g></svg></div>
  </footer>
</div>
</body>
</html>
```

FILE: styles.css
```css
* { box-sizing: border-box; }
html, body { margin: 0; padding: 0; }
body { width: 3420px; height: 2214px; overflow: hidden; background: #282828; font-family: "Inter", "Liberation Sans", sans-serif; }
.defs { position: absolute; }
.ico-txt { font-family: "Liberation Sans", sans-serif; font-weight: 700; }
.ico-reg { font-family: "Liberation Sans", sans-serif; font-weight: 400; }
.ico-light { font-family: "Inter", sans-serif; font-weight: 300; }
.ico-serif { font-family: "Liberation Serif", serif; font-weight: 700; }
.ico-it { font-style: italic; }

.desktop { width: 3420px; height: 2214px; display: flex; flex-direction: column; background: #282828; }

.menubar { height: 78px; flex: none; display: flex; align-items: center; padding: 0 0 4px 41px; background: #2b2b2b; color: #fff; font-size: 25.5px; }
.apple { margin-right: 40px; flex: none; }
.menu-left { display: flex; gap: 42px; letter-spacing: -.13px; }
.menu-app { font-weight: 700; }
.menu-right { margin-left: auto; width: 1196px; display: flex; align-items: center; gap: 34px; }
.menu-right svg { flex: none; }
.lang { width: 44px; height: 38px; margin-right: 4px; border: 2px solid #eee; border-radius: 5px; font-size: 21px; font-weight: 600; display: flex; align-items: center; justify-content: center; color: #eee; flex: none; }
.battery { width: 119px; display: flex; align-items: center; gap: 9px; font-size: 22px; font-weight: 500; flex: none; }
.bat-body { width: 50px; height: 24px; border: 2px solid #8c8c8c; border-radius: 6px; padding: 2px; display: block; flex: none; }
.bat-fill { display: block; width: 100%; height: 100%; background: #fcd145; border-radius: 3px; }
.clock { margin-left: -11px; white-space: nowrap; font-size: 26px; }

.window { height: 1968px; flex: none; position: relative; border-radius: 22px; overflow: hidden; display: flex; flex-direction: column; background: #fff; box-shadow: 0 8px 40px rgba(0,0,0,.5); z-index: 1; }

.tabstrip { height: 80px; flex: none; display: flex; align-items: flex-start; padding-top: 12px; background: #d4e9c5; border-top: 2px solid #e0efd6; }
.traffic { width: 179px; height: 56px; flex: none; display: flex; align-items: center; padding-left: 43px; gap: 17px; }
.tl { width: 23px; height: 23px; border-radius: 50%; display: block; }
.tl-r { background: #ee6a5f; }
.tl-y { background: #f4bd4f; }
.tl-g { background: #61c454; }
.tab { width: 120.2px; height: 54px; flex: none; display: flex; align-items: center; padding-left: 17px; position: relative; }
.tab::after { content: ""; position: absolute; right: 0; top: 10px; width: 3px; height: 32px; background: #fff; }
.tab-pre::after { display: none; }
.fav { width: 40px; height: 40px; flex: none; }
.tab-label { margin-left: 13px; width: 30px; flex: none; white-space: nowrap; font-size: 24px; color: #333; -webkit-mask-image: linear-gradient(to right, #000 60%, transparent); mask-image: linear-gradient(to right, #000 60%, transparent); }
.tab-active { width: 110px; height: 66px; margin: 0 5px; flex: none; position: relative; display: flex; align-items: flex-start; padding: 7px 0 0 13px; background: #fff; border-radius: 20px 20px 0 0; }
.tab-active::before, .tab-active::after { content: ""; position: absolute; bottom: 0; width: 20px; height: 20px; }
.tab-active::before { left: -20px; background: radial-gradient(circle at 0 0, transparent 20px, #fff 20.5px); }
.tab-active::after { right: -20px; background: radial-gradient(circle at 100% 0, transparent 20px, #fff 20.5px); }
.close { margin: 12px 0 0 16px; flex: none; }
.newtab { margin: 16px 0 0 22px; flex: none; }
.tabsearch { margin: 0 0 0 126px; width: 54px; height: 56px; border-radius: 27px; background: #fff; display: flex; align-items: center; justify-content: center; flex: none; }

.toolbar { height: 80px; flex: none; display: flex; align-items: flex-start; padding: 12px 0 0 9px; background: #fff; }
.tb-nav { width: 72px; height: 68px; flex: none; display: flex; align-items: center; justify-content: center; }
.omnibox { width: 2836px; height: 68px; margin-left: 15px; flex: none; display: flex; align-items: center; padding: 0 32px 0 11px; border-radius: 34px; background: #e0e0e0; }
.site-info { width: 48px; height: 48px; border-radius: 50%; background: #fff; display: flex; align-items: center; justify-content: center; flex: none; }
.url { margin-left: 15px; font-size: 28px; letter-spacing: .17px; color: #222; white-space: nowrap; }
.star { margin-left: auto; flex: none; }
.tb-ext, .tb-dl, .tb-avatar, .tb-dots { height: 68px; flex: none; display: flex; align-items: center; justify-content: center; }
.tb-ext { width: 106px; }
.tb-sep { width: 2px; height: 32px; margin-top: 18px; background: #c7e0b4; flex: none; }
.tb-dl { width: 96px; }
.tb-avatar { width: 52px; }
.tb-dots { width: 90px; flex-direction: column; gap: 6px; }
.tb-dots i { width: 6px; height: 6px; border-radius: 50%; background: #222; display: block; }

.bookmarks { height: 82px; flex: none; display: flex; align-items: center; padding: 0 62px 2px 38px; background: #fff; border-bottom: 2px solid #cfcfcf; font-size: 24px; color: #333; }
.apps { margin-right: 31px; flex: none; }
.bm-sep { width: 2px; height: 32px; margin-right: 29px; background: #c7e0b4; flex: none; display: block; }
.bm { display: flex; align-items: center; gap: 12px; margin-right: 32.6px; white-space: nowrap; flex: none; }
.bm svg { width: 32px; height: 32px; flex: none; overflow: visible; }
.bm-more { margin-left: auto; flex: none; }

.page { flex: 1; min-height: 0; position: relative; overflow: hidden; background: #1f2937; }
.page::after { content: ""; position: absolute; left: 0; right: 0; bottom: 0; height: 70px; background: linear-gradient(to bottom, transparent, rgba(0,0,0,.08)); }
.site-nav { height: 130px; display: flex; align-items: center; justify-content: space-between; padding: 0 494px; background: #111827; border-bottom: 2px solid #374151; }
.logo { width: 140px; height: 110px; display: block; flex: none; }
.logo svg { display: block; }
.nav-links { display: flex; gap: 64px; font-size: 32px; letter-spacing: -.6px; color: #d1d5db; line-height: 48px; }
.nav-active { color: #58bd8b; font-weight: 500; }
.search-btn { width: 76px; height: 76px; padding: 0; display: flex; align-items: center; justify-content: center; background: #1f2937; border: 2px solid #374151; border-radius: 16px; }

.hero { display: flex; flex-direction: column; align-items: center; padding: 44px 494px 0; }
.hero-title { margin: 0; font-size: 96px; line-height: 96px; font-weight: 700; color: #fff; letter-spacing: -3px; }
.accent { color: #58bd8b; }
.hero-sub { margin: 47px 0 0; font-size: 40px; line-height: 56px; font-weight: 300; letter-spacing: -1.1px; color: #d1d5db; }
.hero-btn { margin-top: 65px; height: 92px; padding: 0 45px; font-family: inherit; font-size: 32px; font-weight: 400; letter-spacing: -.6px; color: #fff; background: #55b686; border: 0; border-radius: 14px; box-shadow: 0 0 0 4px #2d5fc9, 0 0 0 6px #fff; }
.grid { margin-top: 130px; width: 2432px; display: grid; grid-template-columns: repeat(3, 1fr); gap: 64px; }
.card { background: #2b3447; border: 2px solid #465062; border-radius: 24px; overflow: hidden; }
.card-img { height: 384px; background: #8b919c; border-radius: 0 0 8px 8px; }
.card-body { padding: 48px; display: flex; flex-direction: column; gap: 24px; }
.sk { height: 32px; border-radius: 8px; background: #8b919c; }
.sk-title { height: 48px; width: 75%; }
.sk-short { width: 66.66%; }

.fab { position: absolute; z-index: 1; padding: 0; border: 0; border-radius: 50%; display: flex; align-items: center; justify-content: center; box-shadow: 0 10px 30px rgba(0,0,0,.15); }
.fab-up { width: 96px; height: 96px; right: 64px; bottom: 256px; background: #4a90e8; }
.fab-chat { width: 112px; height: 112px; right: 48px; bottom: 48px; background: #55b686; }

.dock { width: 3199px; height: 149px; margin: 8px 0 0 110px; flex: none; display: flex; align-items: flex-start; gap: 32px; padding: 19px 0 0 20px; background: #6f6f6f; border: 2px solid #868686; border-radius: 44px; position: relative; z-index: 2; }
.dk { width: 96px; height: 98px; flex: none; position: relative; }
.dk svg { display: block; width: 96px; height: auto; overflow: visible; }
.dk-big svg { width: 110px; margin: -10px 0 0 -7px; }
.dk-tall svg { margin-top: -9px; }
.dk-on::after { content: ""; position: absolute; left: 45px; top: 118px; width: 6px; height: 7px; border-radius: 50%; background: #000; }
.dk-sep { width: 2px; height: 110px; margin: -1px 9px 0 15px; background: #3a3a3a; flex: none; display: block; }
.badge { position: absolute; right: -14px; top: -11px; min-width: 46px; height: 46px; padding: 0 6px; border-radius: 23px; background: #e0523f; color: #fff; font-size: 24px; display: flex; align-items: center; justify-content: center; }
.badge-wide { right: -14px; width: 74px; font-size: 22px; }
```
